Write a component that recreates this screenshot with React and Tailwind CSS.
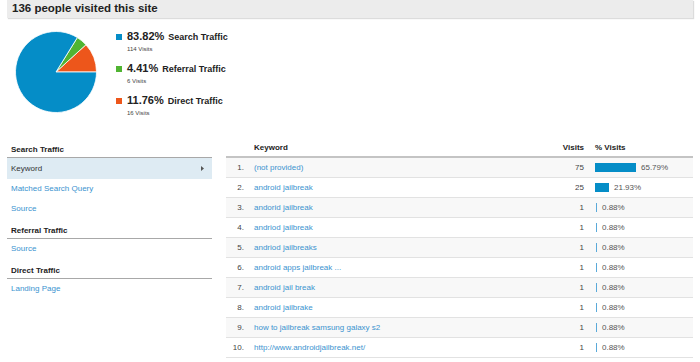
import React from "react";

const legend = [
  { color: "bg-[#058dc7]", pct: "83.82%", label: "Search Traffic", visits: "114 Visits" },
  { color: "bg-[#50b432]", pct: "4.41%", label: "Referral Traffic", visits: "6 Visits" },
  { color: "bg-[#ed561b]", pct: "11.76%", label: "Direct Traffic", visits: "16 Visits" },
];

const rows = [
  ["(not provided)", 75, 65.79],
  ["android jailbreak", 25, 21.93],
  ["andorid jailbreak", 1, 0.88],
  ["andriod jailbreak", 1, 0.88],
  ["andriod jailbreaks", 1, 0.88],
  ["android apps jailbreak ...", 1, 0.88],
  ["android jail break", 1, 0.88],
  ["android jailbrake", 1, 0.88],
  ["how to jailbreak samsung galaxy s2", 1, 0.88],
  ["http://www.androidjailbreak.net/", 1, 0.88],
];

function Pie() {
  return (
    <svg width="82" height="82" viewBox="0 0 82 82" className="shrink-0">
      <path d="M41 41 L81.5 41 A40.5 40.5 0 0 0 70.95 13.74 Z" fill="#ed561b" stroke="#fff" strokeWidth="0.8" />
      <path d="M41 41 L70.95 13.74 A40.5 40.5 0 0 0 62.34 6.58 Z" fill="#50b432" stroke="#fff" strokeWidth="0.8" />
      <path d="M41 41 L62.34 6.58 A40.5 40.5 0 1 0 81.5 41 Z" fill="#058dc7" stroke="#fff" strokeWidth="0.8" />
    </svg>
  );
}

function NavHeading({ children }) {
  return (
    <div className="h-[20px] flex items-end border-b border-[#a8a8a8] pl-[4px] pb-[1px] text-[8px] leading-[12px] font-bold text-[#222]">
      {children}
    </div>
  );
}

function NavLink({ children, h = "h-[20px]" }) {
  return (
    <div className={`${h} flex items-center pl-[4px] text-[8px] text-[#3b93cf]`}>{children}</div>
  );
}

export default function App() {
  return (
    <div className="w-[700px] h-[362px] bg-white px-[7px] overflow-hidden" style={{ fontFamily: '"Liberation Sans", Arial, sans-serif' }}>
      <div className="h-[18px] bg-[#ececec] flex items-center pl-[5px] shadow-[1px_1px_1px_#dcdcdc] text-[11.5px] font-bold text-[#222]">
        136 people visited this site
      </div>

      <div className="mt-[12px] flex items-start">
        <div className="ml-[8px] mt-[1px]">
          <Pie />
        </div>
        <div className="ml-[19px] flex flex-col gap-[9px]">
          {legend.map((l) => (
            <div key={l.label} className="flex flex-col">
              <div className="flex items-center h-[13px]">
                <span className={`w-[6px] h-[6px] ${l.color} mr-[5px] mt-[1px]`}></span>
                <span className="text-[11px] leading-[13px] font-bold text-[#222]">{l.pct}</span>
                <span className="ml-[4px] text-[9px] leading-[13px] font-bold text-[#222] mt-[1px]">{l.label}</span>
              </div>
              <div className="mt-[2px] ml-[11px] text-[6px] leading-[8px] text-[#444]">{l.visits}</div>
            </div>
          ))}
        </div>
      </div>

      <div className="mt-[21px] flex">
        <div className="w-[205px] flex flex-col">
          <NavHeading>Search Traffic</NavHeading>
          <div className="h-[21px] flex items-center justify-between pl-[4px] pr-[8px] bg-[#deebf3] text-[8px] text-[#333]">
            <span>Keyword</span>
            <svg width="3" height="5" viewBox="0 0 3 5"><path d="M0 0 L3 2.5 L0 5 Z" fill="#555" /></svg>
          </div>
          <NavLink>Matched Search Query</NavLink>
          <NavLink>Source</NavLink>
          <NavHeading>Referral Traffic</NavHeading>
          <NavLink>Source</NavLink>
          <NavHeading>Direct Traffic</NavHeading>
          <NavLink>Landing Page</NavLink>
        </div>

        <div className="ml-[14px] flex-1 flex flex-col">
          <div className="h-[20px] flex items-center border-b-2 border-[#c4c4c4] text-[8px] font-bold text-[#222] pt-[1px]">
            <div className="w-[18px]"></div>
            <div className="ml-[10px] flex-1">Keyword</div>
            <div className="w-[40px] text-right mr-[-4px]">Visits</div>
            <div className="ml-[15px] w-[98px]">% Visits</div>
          </div>
          {rows.map(([kw, v, p], i) => (
            <div
              key={i}
              className={`h-[20px] flex items-center border-b border-[#e2e2e2] text-[8px] ${i % 2 === 0 ? "bg-[#f8f8f8]" : "bg-white"}`}
            >
              <div className="w-[18px] text-right text-[#444]">{i + 1}.</div>
              <div className="ml-[10px] flex-1 text-[#3b93cf]">{kw}</div>
              <div className="w-[40px] text-right text-[#444]">{v}</div>
              <div className="ml-[11px] w-[98px] flex items-center">
                <div
                  className={`h-[9px] ${p > 1 ? "bg-[#058dc7]" : "bg-[#5aa9d9]"}`}
                  style={{ width: `${Math.max(1, Math.round(p * 0.623))}px`, marginLeft: p > 1 ? 0 : "1px" }}
                ></div>
                <span className="ml-[5px] text-[#555]">{p.toFixed(2)}%</span>
              </div>
            </div>
          ))}
        </div>
      </div>
    </div>
  );
}
